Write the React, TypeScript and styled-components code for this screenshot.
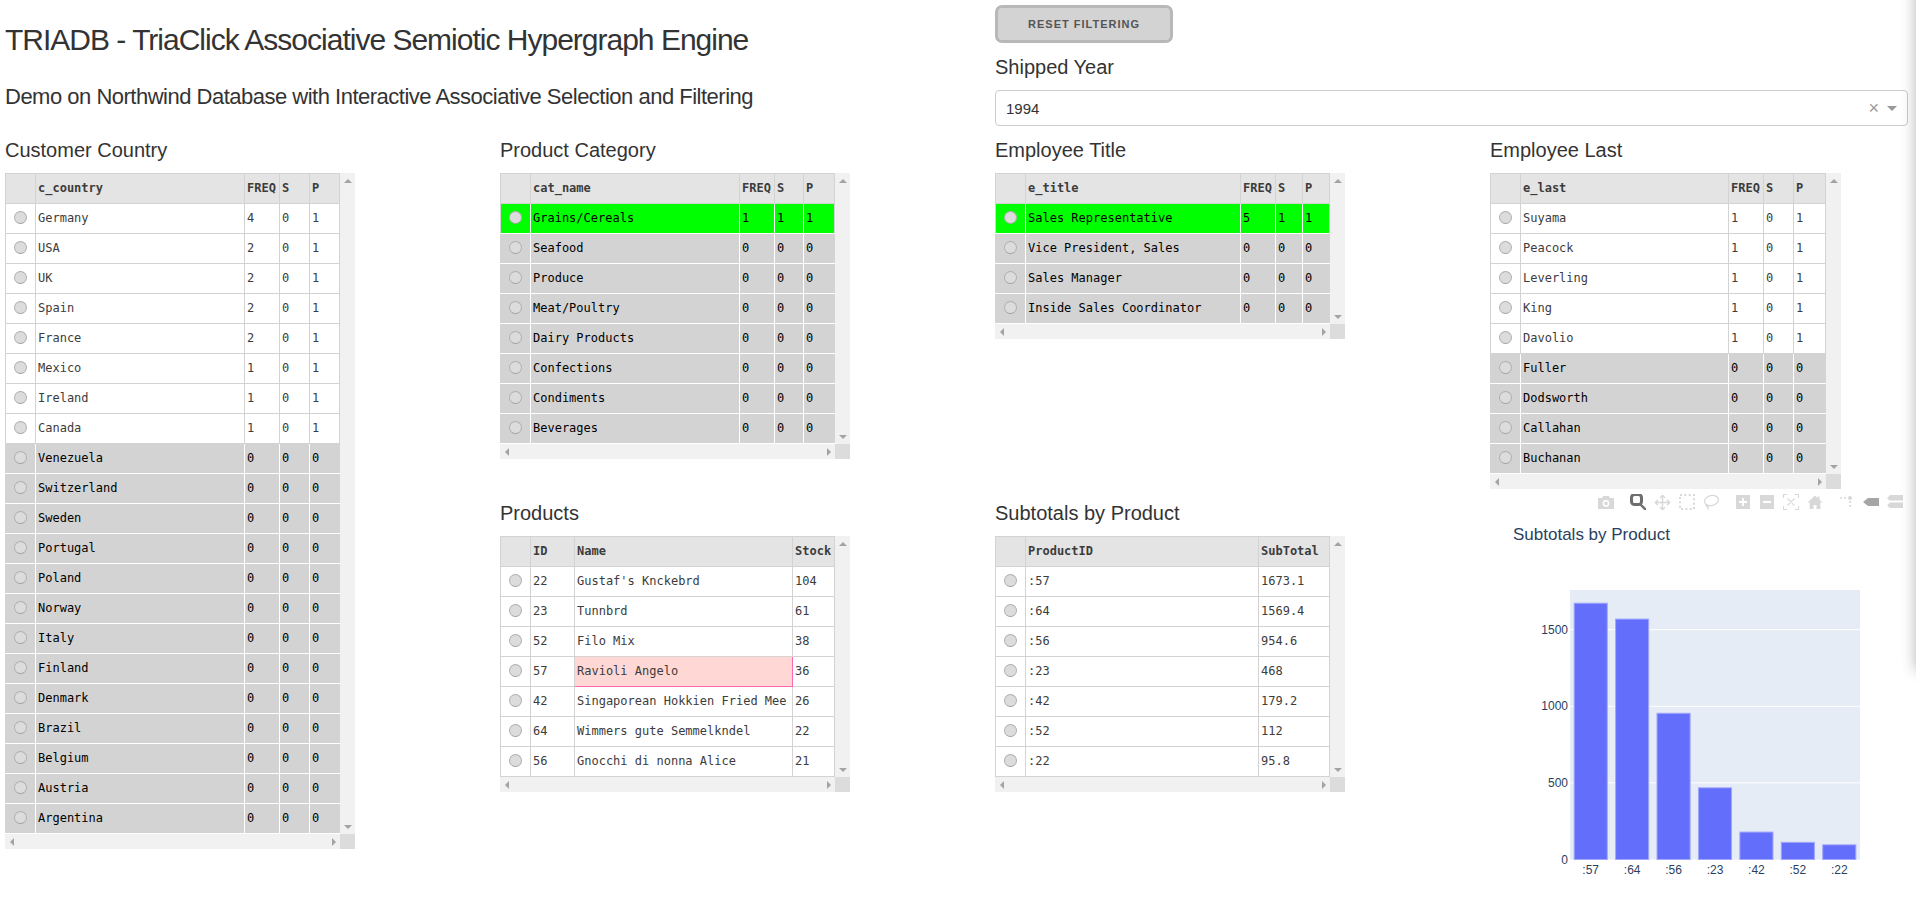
import React from "react";
import styled, { createGlobalStyle } from "styled-components";
import { Move } from "lucide-react";

const GlobalStyle = createGlobalStyle`
  html, body {
    margin: 0;
    padding: 0;
    background: #fff;
    overflow: hidden;
    font-family: "Liberation Sans", Arial, sans-serif;
    color: #333;
  }
`;

const Page = styled.div`
  width: 1903px;
  padding-left: 5px;
`;

const Header = styled.header`
  display: grid;
  grid-template-columns: 990px 913px;
  height: 126px;
`;

const Title = styled.h1`
  margin: 20px 0 0;
  font-size: 30px;
  font-weight: 400;
  line-height: 40px;
  letter-spacing: -1px;
  color: #333;
`;

const Subtitle = styled.h2`
  margin: 22px 0 0;
  font-size: 22px;
  font-weight: 400;
  line-height: 30px;
  letter-spacing: -0.5px;
  color: #333;
`;

const ResetButton = styled.button`
  display: block;
  box-sizing: border-box;
  width: 178px;
  height: 38px;
  margin-top: 5px;
  padding: 0;
  border: 3px solid #b8b8b8;
  border-radius: 7px;
  background: #d3d3d3;
  color: #555;
  font-family: inherit;
  font-size: 11px;
  font-weight: 700;
  letter-spacing: 1px;
  text-transform: uppercase;
`;

const Heading = styled.h3`
  margin: 9px 0 8px;
  font-size: 20px;
  font-weight: 400;
  line-height: 30px;
  color: #333;
`;

const Select = styled.div`
  box-sizing: border-box;
  display: flex;
  align-items: center;
  height: 36px;
  padding: 0 10px;
  border: 1px solid #ccc;
  border-radius: 4px;
  font-size: 15px;
  color: #333;
`;

const SelectValue = styled.span`
  flex: 1;
`;

const ClearMark = styled.span`
  margin-right: 8px;
  font-size: 18px;
  line-height: 18px;
  color: #999;
`;

const Caret = styled.span`
  width: 0;
  height: 0;
  border-style: solid;
  border-width: 5px 5px 0;
  border-color: #999 transparent transparent;
`;

const Board = styled.main`
  display: grid;
  grid-template-columns: repeat(4, 495px);
  grid-template-rows: auto 1fr;
`;

const Cell = styled.section<{ $col: number; $row: number; $span?: number; $lower?: boolean }>`
  grid-column: ${(p) => p.$col};
  grid-row: ${(p) => p.$row} / span ${(p) => p.$span ?? 1};
  padding-top: ${(p) => (p.$lower ? "30px" : "0")};
`;

const Frame = styled.div`
  display: inline-grid;
  grid-template-columns: auto 15px;
  grid-template-rows: auto 15px;
  vertical-align: top;
`;

const Table = styled.table<{ $width: number }>`
  table-layout: fixed;
  width: ${(p) => p.$width}px;
  border-collapse: collapse;
  font-family: "DejaVu Sans Mono", monospace;
  font-size: 12px;
`;

const HeadCell = styled.th`
  height: 30px;
  padding: 0 2px 2px;
  box-sizing: border-box;
  border: 1px solid #d3d3d3;
  background: #e4e4e4;
  color: #3c3c3c;
  font-weight: 700;
  text-align: left;
  white-space: nowrap;
  overflow: hidden;
`;

type Tone = "plain" | "muted" | "hit" | "flagged";

const toneBackground: Record<Tone, string> = {
  plain: "#fff",
  muted: "#d3d3d3",
  hit: "#00ff00",
  flagged: "#ffd8d5",
};

const toneBorder: Record<Tone, string> = {
  plain: "#d3d3d3",
  muted: "#fff",
  hit: "#fff",
  flagged: "hotpink",
};

const BodyCell = styled.td<{ $tone: Tone }>`
  height: 30px;
  padding: 0 2px 2px;
  box-sizing: border-box;
  border: 1px solid ${(p) => toneBorder[p.$tone]};
  background: ${(p) => toneBackground[p.$tone]};
  color: ${(p) => (p.$tone === "muted" || p.$tone === "hit" ? "#000" : "#3c3c3c")};
  white-space: nowrap;
  overflow: hidden;

  &:first-child {
    border-left-color: #d3d3d3;
    text-align: center;
  }
  &:last-child {
    border-right-color: #d3d3d3;
  }
`;

const Radio = styled.span`
  display: inline-block;
  box-sizing: border-box;
  width: 13px;
  height: 13px;
  margin-top: 2px;
  border: 1px solid #b0b0b0;
  border-bottom-color: #a0a0a0;
  border-radius: 50%;
  background: #dcdcdc;
`;

const VScroll = styled.div`
  display: flex;
  flex-direction: column;
  justify-content: space-between;
  align-items: center;
  padding: 6px 0 5px;
  background: #f1f1f1;
`;

const HScroll = styled.div`
  display: flex;
  justify-content: space-between;
  align-items: center;
  padding: 0 4px 0 5px;
  background: #f1f1f1;
`;

const Corner = styled.div`
  background: #dcdcdc;
`;

type Direction = "up" | "down" | "left" | "right";

const arrowBorders: Record<Direction, string> = {
  up: "border-width: 0 4px 4px; border-color: transparent transparent #a3a3a3;",
  down: "border-width: 4px 4px 0; border-color: #a3a3a3 transparent transparent;",
  left: "border-width: 4px 4px 4px 0; border-color: transparent #a3a3a3 transparent transparent;",
  right: "border-width: 4px 0 4px 4px; border-color: transparent transparent transparent #a3a3a3;",
};

const Arrow = styled.span<{ $dir: Direction }>`
  width: 0;
  height: 0;
  border-style: solid;
  ${(p) => arrowBorders[p.$dir]}
`;

const Modebar = styled.div`
  display: flex;
  justify-content: flex-end;
  align-items: center;
  width: 413px;
  height: 26px;
  overflow: hidden;
  color: #d8d8d8;
`;

const ModeGroup = styled.div`
  display: flex;
  gap: 8px;
  margin-left: 16px;
`;

const ModeIcon = styled.svg<{ $active?: boolean }>`
  display: block;
  width: 16px;
  height: 16px;
  color: ${(p) => (p.$active ? "#6e6e6e" : "#d8d8d8")};
`;

const PlotSvg = styled.svg`
  display: block;
  font-family: "Liberation Sans", Arial, sans-serif;
`;

// off-canvas side panel, only its shadow reaches into the page
const SidePanelEdge = styled.div`
  position: fixed;
  left: 1916px;
  top: -20px;
  width: 100px;
  height: 690px;
  box-shadow: 0 0 14px rgba(0, 0, 0, 0.3);
`;

type Row = { cells: (string | number)[]; tone?: Tone; flagged?: number };

type GridProps = {
  columns: string[];
  widths: number[];
  rows: Row[];
};

const DataGrid: React.FC<GridProps> = ({ columns, widths, rows }) => {
  const total = widths.reduce((a, b) => a + b, 0) + 30;
  return (
    <Frame>
      <Table $width={total}>
        <colgroup>
          <col width={30} />
          {widths.map((w, i) => (
            <col key={i} width={w} />
          ))}
        </colgroup>
        <thead>
          <tr>
            <HeadCell />
            {columns.map((c) => (
              <HeadCell key={c}>{c}</HeadCell>
            ))}
          </tr>
        </thead>
        <tbody>
          {rows.map((row, r) => {
            const tone = row.tone ?? "plain";
            return (
              <tr key={r}>
                <BodyCell $tone={tone}>
                  <Radio />
                </BodyCell>
                {row.cells.map((cell, c) => (
                  <BodyCell key={c} $tone={row.flagged === c ? "flagged" : tone}>
                    {cell}
                  </BodyCell>
                ))}
              </tr>
            );
          })}
        </tbody>
      </Table>
      <VScroll>
        <Arrow $dir="up" />
        <Arrow $dir="down" />
      </VScroll>
      <HScroll>
        <Arrow $dir="left" />
        <Arrow $dir="right" />
      </HScroll>
      <Corner />
    </Frame>
  );
};

const freqRows = (active: string[], idle: string[], top?: Row): Row[] => [
  ...(top ? [top] : []),
  ...active.map((name) => ({ cells: [name, 1, 0, 1] })),
  ...idle.map((name) => ({ cells: [name, 0, 0, 0], tone: "muted" as Tone })),
];

const countryRows: Row[] = [
  { cells: ["Germany", 4, 0, 1] },
  { cells: ["USA", 2, 0, 1] },
  { cells: ["UK", 2, 0, 1] },
  { cells: ["Spain", 2, 0, 1] },
  { cells: ["France", 2, 0, 1] },
  ...freqRows(
    ["Mexico", "Ireland", "Canada"],
    [
      "Venezuela",
      "Switzerland",
      "Sweden",
      "Portugal",
      "Poland",
      "Norway",
      "Italy",
      "Finland",
      "Denmark",
      "Brazil",
      "Belgium",
      "Austria",
      "Argentina",
    ]
  ),
];

const categoryRows = freqRows(
  [],
  ["Seafood", "Produce", "Meat/Poultry", "Dairy Products", "Confections", "Condiments", "Beverages"],
  { cells: ["Grains/Cereals", 1, 1, 1], tone: "hit" }
);

const titleRows = freqRows(
  [],
  ["Vice President, Sales", "Sales Manager", "Inside Sales Coordinator"],
  { cells: ["Sales Representative", 5, 1, 1], tone: "hit" }
);

const lastRows = freqRows(
  ["Suyama", "Peacock", "Leverling", "King", "Davolio"],
  ["Fuller", "Dodsworth", "Callahan", "Buchanan"]
);

const productRows: Row[] = [
  { cells: [22, "Gustaf's Knckebrd", 104] },
  { cells: [23, "Tunnbrd", 61] },
  { cells: [52, "Filo Mix", 38] },
  { cells: [57, "Ravioli Angelo", 36], flagged: 1 },
  { cells: [42, "Singaporean Hokkien Fried Mee", 26] },
  { cells: [64, "Wimmers gute Semmelkndel", 22] },
  { cells: [56, "Gnocchi di nonna Alice", 21] },
];

const subtotals: [string, number][] = [
  [":57", 1673.1],
  [":64", 1569.4],
  [":56", 954.6],
  [":23", 468],
  [":42", 179.2],
  [":52", 112],
  [":22", 95.8],
];

const PlotModebar: React.FC = () => (
  <Modebar>
    <ModeGroup>
      <ModeIcon viewBox="0 0 16 16">
        <path
          fill="currentColor"
          fillRule="evenodd"
          d="M0 4h4l1.2-2h5.6l1.2 2h4v11H0zM8 6a3.4 3.4 0 1 0 0 6.8A3.4 3.4 0 0 0 8 6zM8 7.6a1.8 1.8 0 1 1 0 3.6 1.8 1.8 0 0 1 0-3.6z"
        />
      </ModeIcon>
    </ModeGroup>
    <ModeGroup>
      <ModeIcon $active viewBox="0 0 16 16">
        <rect x="1.5" y="0.5" width="10" height="10" rx="3" fill="none" stroke="currentColor" strokeWidth="3" />
        <path d="M11 11l4.500 4.500" stroke="currentColor" strokeWidth="2.400" strokeLinecap="round" />
      </ModeIcon>
      <Move size={17} strokeWidth={2} color="#d8d8d8" />
      <ModeIcon viewBox="0 0 16 16">
        <rect x="1" y="1" width="14" height="14" fill="none" stroke="currentColor" strokeWidth="2" strokeDasharray="2 2.33" />
      </ModeIcon>
      <ModeIcon viewBox="0 0 16 16">
        <ellipse cx="8.5" cy="6.5" rx="7" ry="5" fill="none" stroke="currentColor" strokeWidth="1.3" transform="rotate(-15 8.5 6.5)" />
        <path d="M3.5 10c-1.5 1.5 0 2.5 1 2.5s1 1.5 0 3" fill="none" stroke="currentColor" strokeWidth="1.3" />
      </ModeIcon>
    </ModeGroup>
    <ModeGroup>
      <ModeIcon viewBox="0 0 16 16">
        <path fill="currentColor" fillRule="evenodd" d="M1 1h14v14H1zM7 4v3H4v2h3v3h2V9h3V7H9V4z" />
      </ModeIcon>
      <ModeIcon viewBox="0 0 16 16">
        <path fill="currentColor" fillRule="evenodd" d="M1 1h14v14H1zM4 7v2h8V7z" />
      </ModeIcon>
      <ModeIcon viewBox="0 0 16 16">
        <path
          fill="none"
          stroke="currentColor"
          strokeWidth="1.1"
          d="M0.5 4V0.5H4M12 0.5h3.5V4M15.5 12v3.5H12M4 15.5H0.5V12M4.5 4.5l7 7M11.5 4.5l-7 7"
        />
      </ModeIcon>
      <ModeIcon viewBox="0 0 16 16">
        <path fill="currentColor" d="M8 1.5L0.5 8.5h2.2V15h3.8v-4h3v4h3.8V8.5h2.2l-3-2.8V2.5h-2v1.4z" />
      </ModeIcon>
    </ModeGroup>
    <ModeGroup>
      <ModeIcon viewBox="0 0 16 16">
        <circle cx="11" cy="4" r="2" fill="currentColor" />
        <path d="M1 4h7M11 7v8" stroke="currentColor" strokeWidth="1.6" strokeDasharray="2 2" />
      </ModeIcon>
      <ModeIcon $active viewBox="0 0 16 16">
        <path fill="#a6a6a6" d="M0 8l5-4h11v8H5z" />
      </ModeIcon>
      <ModeIcon viewBox="0 0 16 16">
        <path fill="currentColor" d="M0 4.5L3 1h13v5.500H3zM0 11.500L3 8.500h13v5.500H3z" />
      </ModeIcon>
    </ModeGroup>
  </Modebar>
);

const SubtotalsPlot: React.FC = () => {
  const left = 80;
  const right = 370;
  const top = 75;
  const zero = 344.5;
  const perUnit = 0.1532;
  const step = (right - left) / subtotals.length;
  const barWidth = step * 0.8;
  return (
    <PlotSvg width={415} height={375}>
      <text x={23} y={25} fontSize={17} fill="#2a3f5f">
        Subtotals by Product
      </text>
      <rect x={left} y={top} width={right - left} height={zero - top} fill="#e5ecf6" />
      {[500, 1000, 1500].map((v) => (
        <line key={v} x1={left} x2={right} y1={zero - v * perUnit} y2={zero - v * perUnit} stroke="#fff" />
      ))}
      {subtotals.map(([label, value], i) => {
        const h = value * perUnit;
        return (
          <rect
            key={label}
            x={left + i * step + (step - barWidth) / 2}
            y={zero - h}
            width={barWidth}
            height={h}
            fill="#636efa"
            stroke="#a2a8fc"
            strokeWidth={1}
          />
        );
      })}
      {[0, 500, 1000, 1500].map((v) => (
        <text key={v} x={left - 2} y={zero - v * perUnit + 4} fontSize={12} textAnchor="end" fill="#2a3f5f">
          {v}
        </text>
      ))}
      {subtotals.map(([label], i) => (
        <text key={label} x={left + (i + 0.5) * step} y={zero + 14} fontSize={12} textAnchor="middle" fill="#2a3f5f">
          {label}
        </text>
      ))}
    </PlotSvg>
  );
};

const App: React.FC = () => (
  <Page>
    <GlobalStyle />
    <Header>
      <div>
        <Title>TRIADB - TriaClick Associative Semiotic Hypergraph Engine</Title>
        <Subtitle>Demo on Northwind Database with Interactive Associative Selection and Filtering</Subtitle>
      </div>
      <div>
        <ResetButton>Reset Filtering</ResetButton>
        <Heading>Shipped Year</Heading>
        <Select>
          <SelectValue>1994</SelectValue>
          <ClearMark>×</ClearMark>
          <Caret />
        </Select>
      </div>
    </Header>
    <Board>
      <Cell $col={1} $row={1} $span={2}>
        <Heading>Customer Country</Heading>
        <DataGrid columns={["c_country", "FREQ", "S", "P"]} widths={[209, 35, 30, 30]} rows={countryRows} />
      </Cell>
      <Cell $col={2} $row={1}>
        <Heading>Product Category</Heading>
        <DataGrid columns={["cat_name", "FREQ", "S", "P"]} widths={[209, 35, 29, 31]} rows={categoryRows} />
      </Cell>
      <Cell $col={3} $row={1}>
        <Heading>Employee Title</Heading>
        <DataGrid columns={["e_title", "FREQ", "S", "P"]} widths={[215, 35, 27, 27]} rows={titleRows} />
      </Cell>
      <Cell $col={4} $row={1} $span={2}>
        <Heading>Employee Last</Heading>
        <DataGrid columns={["e_last", "FREQ", "S", "P"]} widths={[208, 35, 30, 32]} rows={lastRows} />
        <PlotModebar />
        <SubtotalsPlot />
      </Cell>
      <Cell $col={2} $row={2} $lower>
        <Heading>Products</Heading>
        <DataGrid columns={["ID", "Name", "Stock"]} widths={[44, 218, 42]} rows={productRows} />
      </Cell>
      <Cell $col={3} $row={2} $lower>
        <Heading>Subtotals by Product</Heading>
        <DataGrid
          columns={["ProductID", "SubTotal"]}
          widths={[233, 71]}
          rows={subtotals.map(([id, value]) => ({ cells: [id, value] }))}
        />
      </Cell>
    </Board>
    <SidePanelEdge />
  </Page>
);

export default App;
